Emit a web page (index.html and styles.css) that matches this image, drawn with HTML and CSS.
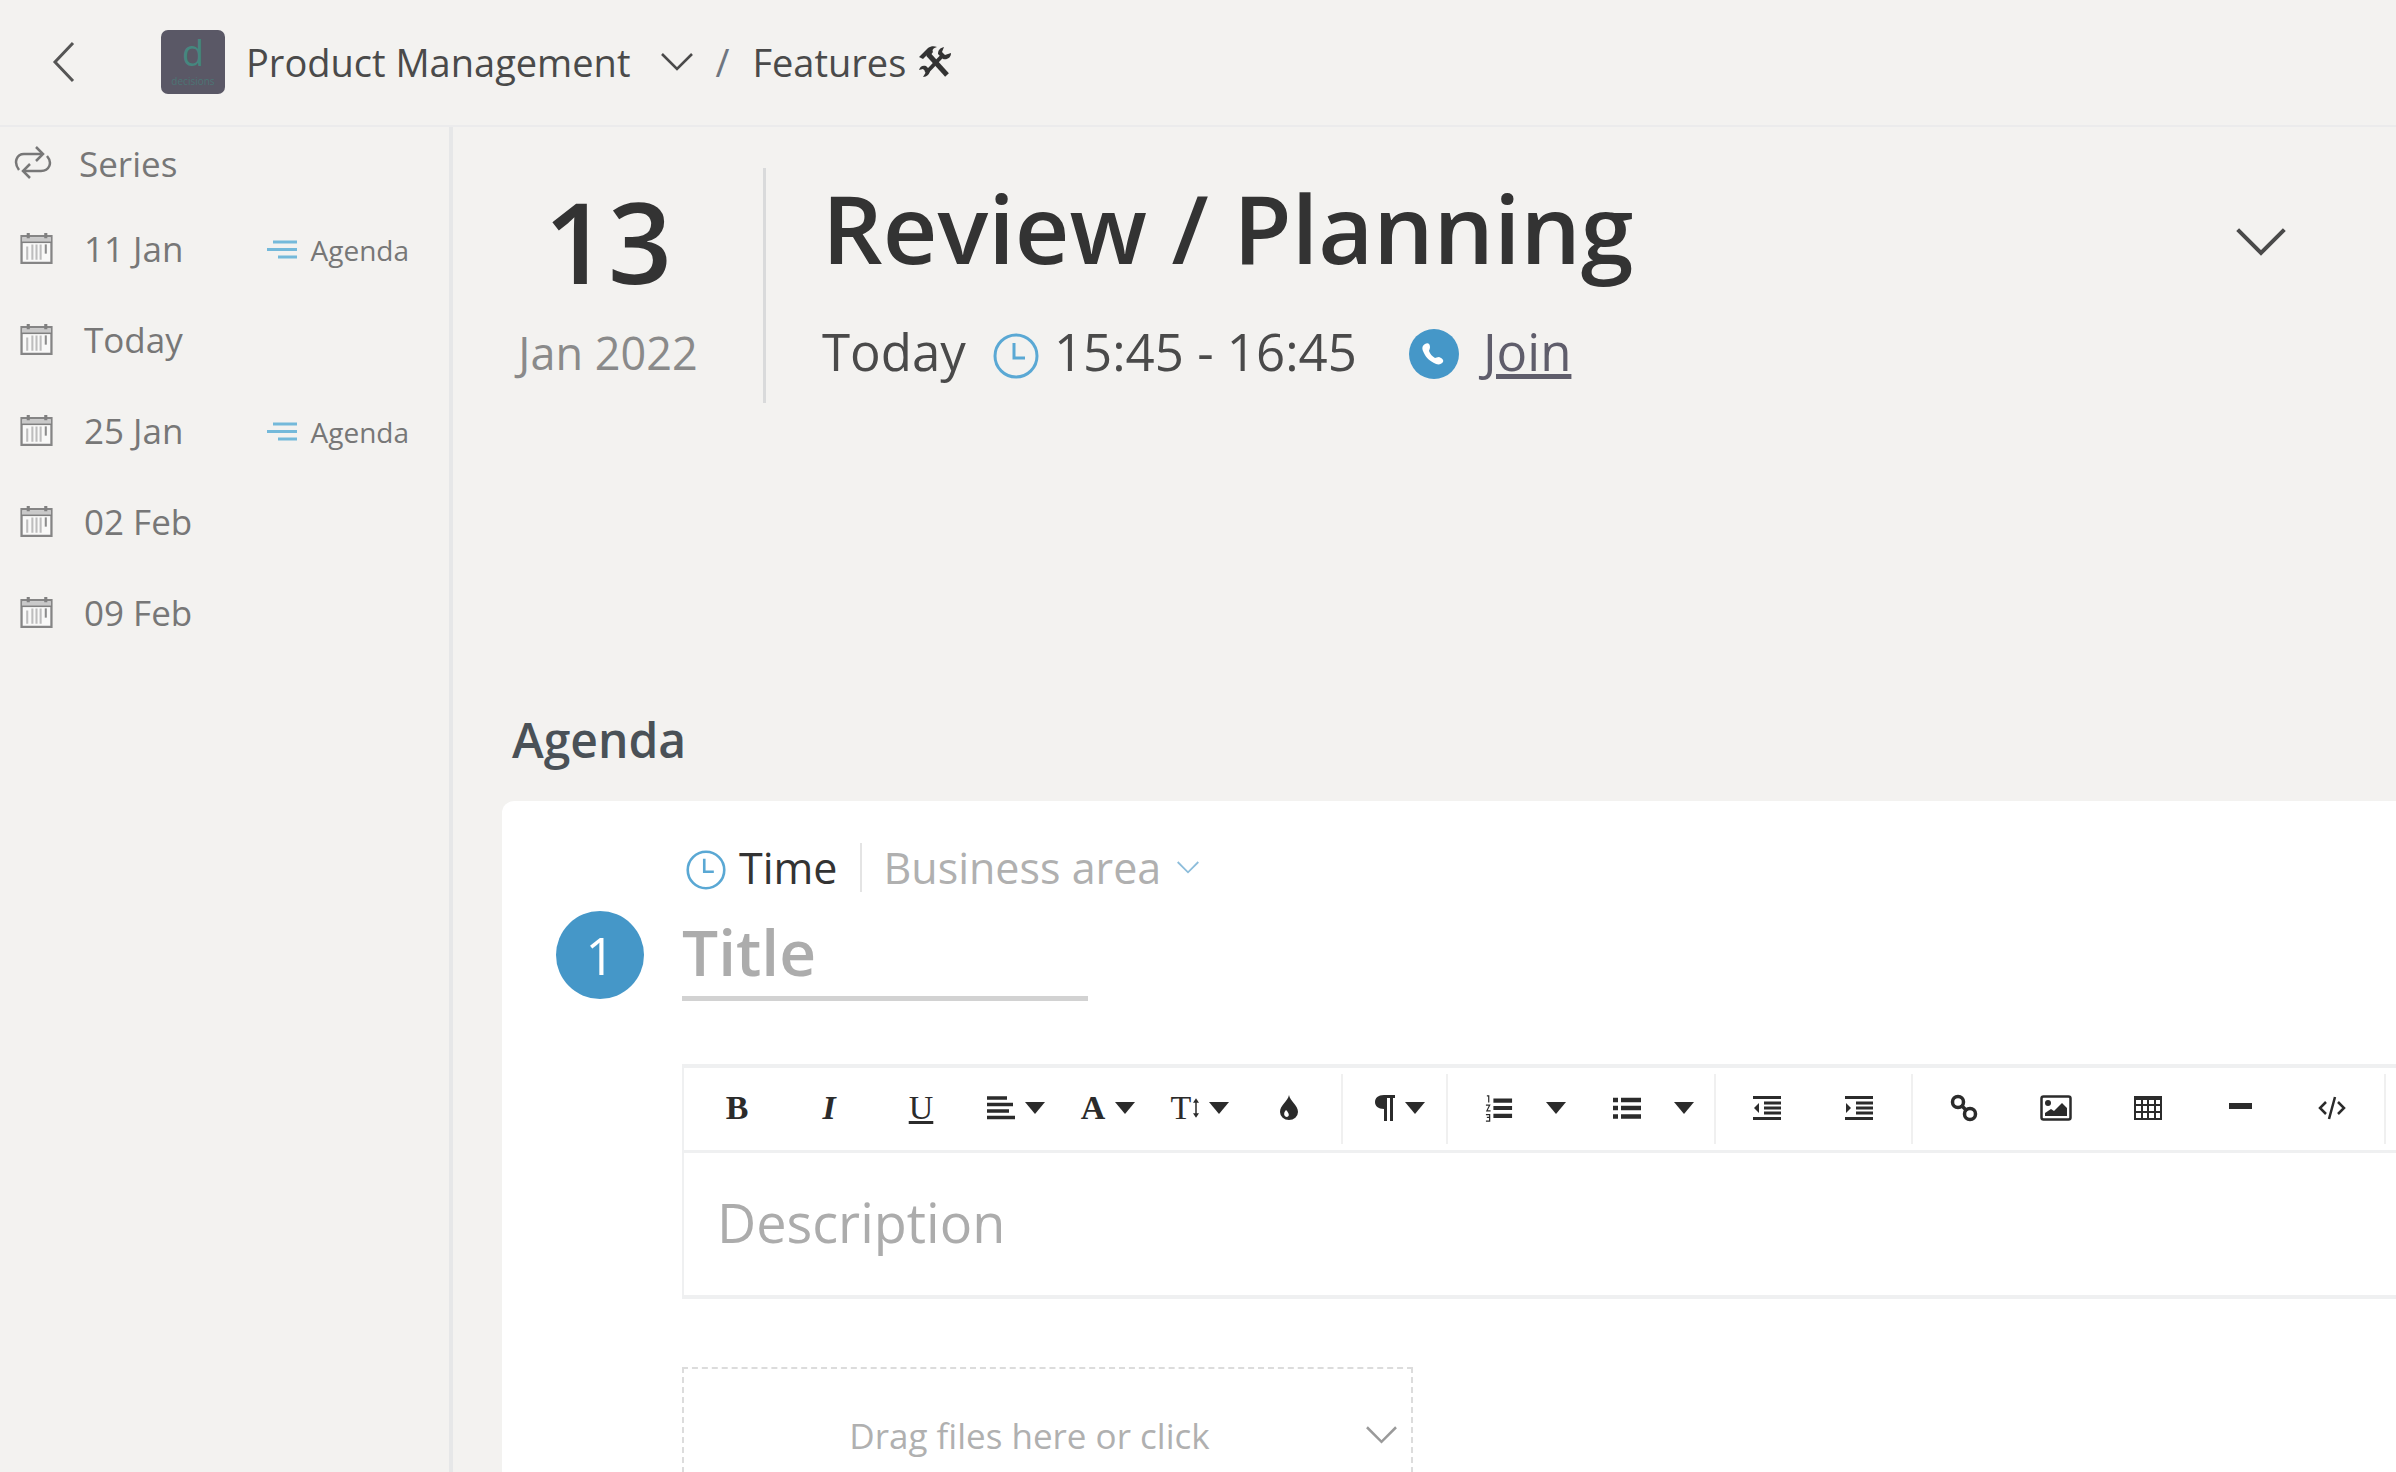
FILE: index.html
```html
<!DOCTYPE html>
<html lang="en">
<head>
<meta charset="utf-8">
<meta name="viewport" content="width=device-width, initial-scale=1">
<title>Review / Planning</title>
<link rel="stylesheet" href="styles.css">
</head>
<body>
<svg class="sprite" aria-hidden="true">
  <symbol id="down" viewBox="0 0 32 18"><path d="M1 1l15 15L31 1" fill="none" stroke="currentColor" stroke-width="2.6"/></symbol>
  <symbol id="caret" viewBox="0 0 20 12"><path d="M0 0h20L10 12z" fill="currentColor"/></symbol>
  <symbol id="cal" viewBox="0 0 32 32">
    <path d="M1.500 4h29v26h-29z" fill="#f9f9f8" stroke="#858585" stroke-width="2.200"/>
    <path d="M2 5h28v5H2z" fill="#c9c9c9"/><path d="M1 10h30" stroke="#808080" stroke-width="1.500"/>
    <path d="M8 1v5M25 1v5" stroke="#808080" stroke-width="3"/>
    <path d="M7 14v13M12 12v15M16 12v15M20 12v15" stroke="#bdbdbd" stroke-width="2"/><path d="M25 12v9" stroke="#8c8c8c" stroke-width="2"/>
  </symbol>
  <symbol id="lines" viewBox="0 0 30 20"><path d="M6 2h24M0 9.500h30M11 17h19" stroke="#74b9da" stroke-width="3"/></symbol>
  <symbol id="clock" viewBox="0 0 46 46"><circle cx="23" cy="23" r="21" fill="none" stroke="#5aa8d4" stroke-width="3"/><path d="M21 10v15h11" fill="none" stroke="#5aa8d4" stroke-width="3"/></symbol>
</svg>

<header class="topbar">
  <button class="back" aria-label="Back"><svg width="24" height="42" viewBox="0 0 24 42"><path d="M21 2L3 21l18 19" fill="none" stroke="#555" stroke-width="3"/></svg></button>
  <span class="logo"><span class="logo-mark">d</span><span class="logo-name">decisions</span></span>
  <button class="crumb">Product Management <svg class="crumb-arrow"><use href="#down"/></svg></button>
  <span class="slash">/</span>
  <a class="crumb" href="#">Features
    <svg class="tools" viewBox="0 0 34 34"><path d="M10 9l19 21" stroke="#333" stroke-width="5"/><path d="M25 10L8 28" stroke="#333" stroke-width="4"/><path d="M1 12L10 3c3-2 6-2 9-1-4 1-5 3-4 5l-3 4-3-1-4 4z" fill="#333"/><path d="M26 2l-2 5 3 3 6-2c0 5-4 7-8 6l-5-5c0-4 2-6 6-7zM5 32l3-5-3-3-4 1c1-4 4-5 7-4l4 4c0 4-3 7-7 7z" fill="#333"/></svg>
  </a>
</header>

<div class="layout">
  <nav class="series" aria-label="Series">
    <h2 class="series-head"><svg class="repeat" viewBox="0 0 38 34"><path d="M33 10c6 7 2 15-6 15H10M5 24C-1 16 3 8 10 8h19" fill="none" stroke="#777" stroke-width="2.500"/><path d="M22 1l7 7-7 7M16 18l-7 7 7 7" fill="none" stroke="#777" stroke-width="2.500"/></svg>Series</h2>
    <ul class="dates">
      <li><a class="date" href="#"><svg class="cal"><use href="#cal"/></svg>11 Jan</a><a class="has-agenda" href="#"><svg class="lines"><use href="#lines"/></svg>Agenda</a></li>
      <li><a class="date" href="#"><svg class="cal"><use href="#cal"/></svg>Today</a></li>
      <li><a class="date" href="#"><svg class="cal"><use href="#cal"/></svg>25 Jan</a><a class="has-agenda" href="#"><svg class="lines"><use href="#lines"/></svg>Agenda</a></li>
      <li><a class="date" href="#"><svg class="cal"><use href="#cal"/></svg>02 Feb</a></li>
      <li><a class="date" href="#"><svg class="cal"><use href="#cal"/></svg>09 Feb</a></li>
    </ul>
  </nav>

  <main class="meeting">
    <section class="hero">
      <div class="day"><div class="day-number">13</div><div class="day-month">Jan 2022</div></div>
      <div class="summary">
        <h1 class="name">Review / Planning</h1>
        <div class="when">
          <span>Today</span>
          <svg class="when-clock"><use href="#clock"/></svg>
          <span>15:45 - 16:45</span>
          <svg class="phone" viewBox="0 0 50 50"><circle cx="25" cy="25" r="25" fill="#4597c8"/><path d="M16 15c3-2 5 0 5 3 0 2-1 3-1 4 1 3 3 5 6 7 1 0 2-1 4-1 3 1 5 3 4 5-2 3-6 3-9 1-6-3-9-7-11-12-1-3-1-5 2-7z" fill="#fff"/></svg>
          <a class="join" href="#">Join</a>
        </div>
      </div>
      <button class="more" aria-label="Show details"><svg class="more-icon"><use href="#down"/></svg></button>
    </section>

    <h2 class="agenda-title">Agenda</h2>
    <section class="card">
      <div class="meta">
        <button class="time"><svg class="time-clock"><use href="#clock"/></svg>Time</button>
        <button class="area">Business area<svg class="area-arrow"><use href="#down"/></svg></button>
      </div>
      <div class="title-row">
        <span class="number">1</span>
        <input class="title" type="text" placeholder="Title" aria-label="Title">
      </div>
      <div class="editor">
        <div class="toolbar" role="toolbar" aria-label="Formatting">
          <div class="group">
            <button class="tool bold" aria-label="Bold">B</button>
            <button class="tool italic" aria-label="Italic">I</button>
            <button class="tool underline" aria-label="Underline">U</button>
            <button class="tool menu" aria-label="Align"><svg class="icon" viewBox="0 0 28 24"><path d="M0 2h20M0 8.500h26M0 15h22M0 21.500h28" stroke="currentColor" stroke-width="3.500"/></svg><svg class="caret"><use href="#caret"/></svg></button>
            <button class="tool menu bold" aria-label="Text colour">A<svg class="caret"><use href="#caret"/></svg></button>
            <button class="tool menu" aria-label="Font size"><span>T</span><svg class="updown" viewBox="0 0 8 26"><path d="M4 4v18" stroke="currentColor" stroke-width="2"/><path d="M0 6l4-6 4 6zM0 20l4 6 4-6z" fill="currentColor"/></svg><svg class="caret"><use href="#caret"/></svg></button>
            <button class="tool" aria-label="Highlight"><svg class="drop" viewBox="0 0 18 26"><path d="M9 0c1 6 9 10 9 17a9 8 0 0 1-18 0C0 10 8 6 9 0zM6 15c-3 3-2 7 1 7 3-1 2-4-1-7z" fill="currentColor" fill-rule="evenodd"/></svg></button>
          </div>
          <div class="group">
            <button class="tool" aria-label="Paragraph format"><svg class="para" viewBox="0 0 20 26"><path d="M20 0v3h-2v23h-3V3h-3v23H9V14C3 14 0 11 0 7s3-7 9-7z" fill="currentColor"/></svg><svg class="caret"><use href="#caret"/></svg></button>
          </div>
          <div class="group">
            <button class="tool" aria-label="Ordered list"><svg class="icon" viewBox="0 0 28 30"><path d="M8 7h20M8 15h20M8 23.500h20" stroke="currentColor" stroke-width="4.500"/><path d="M1 2h2v7M0 12h4l-3 6h4M0 22h4v7H0M1 25h3" fill="none" stroke="currentColor" stroke-width="1.300"/></svg></button>
            <button class="tool-caret" aria-label="Ordered list styles"><svg class="caret"><use href="#caret"/></svg></button>
            <button class="tool" aria-label="Bullet list"><svg class="icon" viewBox="0 0 28 24"><path d="M8 4h20M8 12h20M8 20.500h20M0 4h5M0 12h5M0 20.500h5" stroke="currentColor" stroke-width="4.500"/></svg></button>
            <button class="tool-caret" aria-label="Bullet list styles"><svg class="caret"><use href="#caret"/></svg></button>
          </div>
          <div class="group">
            <button class="tool" aria-label="Decrease indent"><svg class="icon" viewBox="0 0 28 24"><path d="M0 1.500h28M11 7h17M11 12h17M11 17h17M0 22.500h28" stroke="currentColor" stroke-width="3"/><path d="M6 7v10l-5-5z" fill="currentColor"/></svg></button>
            <button class="tool" aria-label="Increase indent"><svg class="icon" viewBox="0 0 28 24"><path d="M0 1.500h28M11 7h17M11 12h17M11 17h17M0 22.500h28" stroke="currentColor" stroke-width="3"/><path d="M1 7v10l5-5z" fill="currentColor"/></svg></button>
          </div>
          <div class="group">
            <button class="tool" aria-label="Insert link"><svg class="icon" viewBox="0 0 28 28"><g fill="none" stroke="currentColor" stroke-width="3.500"><circle cx="8" cy="8" r="5.500"/><circle cx="20" cy="20" r="5.500"/><path d="M11 11l6 6"/></g></svg></button>
            <button class="tool" aria-label="Insert image"><svg class="image" viewBox="0 0 32 26"><rect x="1.500" y="1.500" width="29" height="23" rx="2" fill="none" stroke="currentColor" stroke-width="2.500"/><circle cx="8" cy="8" r="3" fill="currentColor"/><path d="M5 21v-3l6-4 3 2 8-8 5 5v8z" fill="currentColor"/></svg></button>
            <button class="tool" aria-label="Insert table"><svg class="icon" viewBox="0 0 28 24"><path d="M1 1h26v22H1zM1 3h26M1 9h26M1 16h26M8 1v22M14 1v22M21 1v22" fill="none" stroke="currentColor" stroke-width="2"/></svg></button>
            <button class="tool" aria-label="Insert line"><svg class="icon" viewBox="0 0 28 24"><path d="M3 10h23" stroke="currentColor" stroke-width="6"/></svg></button>
            <button class="tool" aria-label="Code view"><svg class="icon" viewBox="0 0 28 24"><path d="M8 6l-6 6 6 6M20 6l6 6-6 6M17 1l-6 22" fill="none" stroke="currentColor" stroke-width="2.500"/></svg></button>
          </div>
        </div>
        <textarea class="description" placeholder="Description" aria-label="Description"></textarea>
      </div>
      <button class="dropzone"><span class="dropzone-text">Drag files here or click</span><svg class="dropzone-arrow"><use href="#down"/></svg></button>
    </section>
  </main>
</div>
</body>
</html>
```

FILE: styles.css
```css
* { box-sizing: border-box; }
body {
  margin: 0;
  height: 100vh;
  overflow: hidden;
  display: flex;
  flex-direction: column;
  background: #f3f2f0;
  color: #4a4a4a;
  font-family: "Open Sans", "Noto Sans", sans-serif;
}
h1, h2, ul { margin: 0; padding: 0; font-weight: 400; list-style: none; }
button { border: 0; padding: 0; margin: 0; background: none; color: inherit; font: inherit; cursor: pointer; }
a { color: inherit; text-decoration: none; }
svg { flex: none; }
.sprite { position: absolute; width: 0; height: 0; }

/* Top bar */
.topbar {
  flex: none;
  height: 127px;
  padding: 0 52px 2px;
  display: flex;
  align-items: center;
  border-bottom: 2px solid #ebebec;
  font-size: 38px;
}
.back { display: flex; margin-right: 85px; }
.logo {
  width: 64px;
  height: 64px;
  margin-right: 21px;
  border-radius: 7px;
  background: #5a5866;
  color: #45877f;
  display: flex;
  flex-direction: column;
  align-items: center;
}
.logo-mark { font-size: 36px; line-height: 46px; }
.logo-name { font-size: 10px; line-height: 10px; opacity: .6; }
.crumb { display: flex; align-items: center; }
.crumb-arrow { width: 32px; height: 18px; margin-left: 31px; }
.slash { margin: 0 23px 0 22px; color: #6f7680; }
.tools { width: 34px; height: 34px; margin-left: 12px; }

.layout { flex: 1; min-height: 0; display: flex; overflow: hidden; }

/* Series list */
.series {
  flex: none;
  width: 453px;
  border-right: 4px solid #e6e7e8;
  color: #777;
  font-size: 35px;
}
.series-head { display: flex; align-items: center; height: 72px; padding-left: 14px; font-size: 35px; }
.repeat { width: 38px; height: 34px; margin-right: 27px; }
.dates { padding-top: 4px; }
.dates li { height: 91px; padding: 0 40px 0 20px; display: flex; align-items: center; justify-content: space-between; }
.date { display: flex; align-items: center; }
.cal { width: 33px; height: 33px; margin-right: 31px; }
.has-agenda { display: flex; align-items: center; padding-top: 2px; font-size: 28px; }
.lines { width: 30px; height: 20px; margin-right: 14px; }

/* Meeting header */
.meeting { flex: 1; min-width: 0; }
.hero { display: flex; margin-top: 41px; height: 235px; }
.day { width: 313px; padding-top: 17px; border-right: 3px solid #d9dadb; text-align: center; }
.day-number { color: #333; font-size: 112px; font-weight: 600; line-height: 112px; }
.day-month { margin-top: 26px; color: #8a8a8a; font-size: 45px; line-height: 60px; }
.summary { flex: 1; padding: 3px 0 0 56px; }
.name { color: #333; font-size: 95px; font-weight: 600; line-height: 112px; }
.when { display: flex; align-items: center; margin-top: 36px; font-size: 51px; line-height: 64px; }
.when-clock { width: 46px; height: 46px; margin: 10px 15px 0 27px; }
.phone { width: 50px; height: 50px; margin: 6px 24px 0 52px; }
.join { text-decoration: underline; color: #5f5d6b; }
.more { align-self: flex-start; margin: 60px 110px 0 0; color: #4a4a4a; }
.more-icon { display: block; width: 50px; height: 28px; }

/* Agenda */
.agenda-title { margin: 305px 0 29px 59px; color: #4a5157; font-size: 48px; font-weight: 600; line-height: 64px; }
.card { margin-left: 49px; padding: 42px 0 60px 180px; background: #fff; border-radius: 12px 0 0 0; }
.meta { display: flex; align-items: center; height: 49px; font-size: 43px; line-height: 49px; }
.time { display: flex; align-items: center; height: 49px; padding: 0 22px 0 4px; border-right: 2px solid #e4e4e4; color: #333; }
.time-clock { width: 40px; height: 40px; margin: 4px 13px 0 0; }
.area { display: flex; align-items: center; margin-left: 22px; color: #b0b0b0; }
.area-arrow { width: 22px; height: 13px; margin-left: 16px; color: #8dbddb; }
.title-row { display: flex; margin: 13px 0 0 -126px; gap: 38px; }
.number {
  width: 88px;
  height: 88px;
  margin-top: 6px;
  border-radius: 50%;
  background: #4597c8;
  color: #fff;
  font-size: 51px;
  line-height: 88px;
  text-align: center;
}
.title {
  width: 406px;
  height: 96px;
  padding: 2px 0 0;
  border: 0;
  border-bottom: 5px solid #d2d2d2;
  background: none;
  font: 600 64px "Open Sans", "Noto Sans", sans-serif;
}
.title::placeholder, .description::placeholder { color: #acacac; opacity: 1; }

/* Editor */
.editor { margin-top: 63px; border: solid #eff0f1; border-width: 4px 0 4px 2px; }
.toolbar { display: flex; align-items: center; height: 85px; border-bottom: 3px solid #eff0f1; overflow: hidden; color: #2b2b2b; }
.group { flex: none; display: flex; align-items: center; height: 70px; padding: 0 6px 0 5px; border-right: 2px solid #f0f0f0; }
.group:first-child { padding-left: 7px; }
.group:nth-child(2) { padding: 0 0 0 11px; }
.group:nth-child(3) { padding-right: 19px; }
.tool {
  width: 92px;
  height: 70px;
  padding-bottom: 2px;
  display: flex;
  align-items: center;
  justify-content: center;
  font: 34px "Liberation Serif", serif;
}
.menu { padding-left: 6px; }
.bold { font-weight: 700; }
.italic { font-style: italic; font-weight: 700; }
.underline { text-decoration: underline; }
.icon { width: 28px; height: 28px; }
.image { width: 32px; height: 26px; }
.drop { width: 18px; height: 26px; }
.para { width: 20px; height: 26px; }
.updown { width: 6px; height: 26px; margin-left: 2px; }
.caret { width: 20px; height: 12px; margin-left: 10px; }
.tool-caret { display: flex; width: 22px; padding-bottom: 2px; justify-content: center; }
.tool-caret .caret { margin: 0; }
.tool-caret + .tool { margin-left: 14px; }
.description {
  display: block;
  width: 100%;
  height: 142px;
  padding: 32px 33px 0;
  border: 0;
  resize: none;
  background: none;
  font: 54px/74px "Open Sans", "Noto Sans", sans-serif;
}
.dropzone {
  width: 731px;
  height: 136px;
  margin-top: 68px;
  padding: 0 14px 0 9px;
  display: flex;
  align-items: center;
  border: 2px dashed #dcdcdc;
  color: #b0b0b0;
  font-size: 35px;
}
.dropzone-text { flex: 1; }
.dropzone-arrow { width: 31px; height: 18px; color: #9a9a9a; }
```
